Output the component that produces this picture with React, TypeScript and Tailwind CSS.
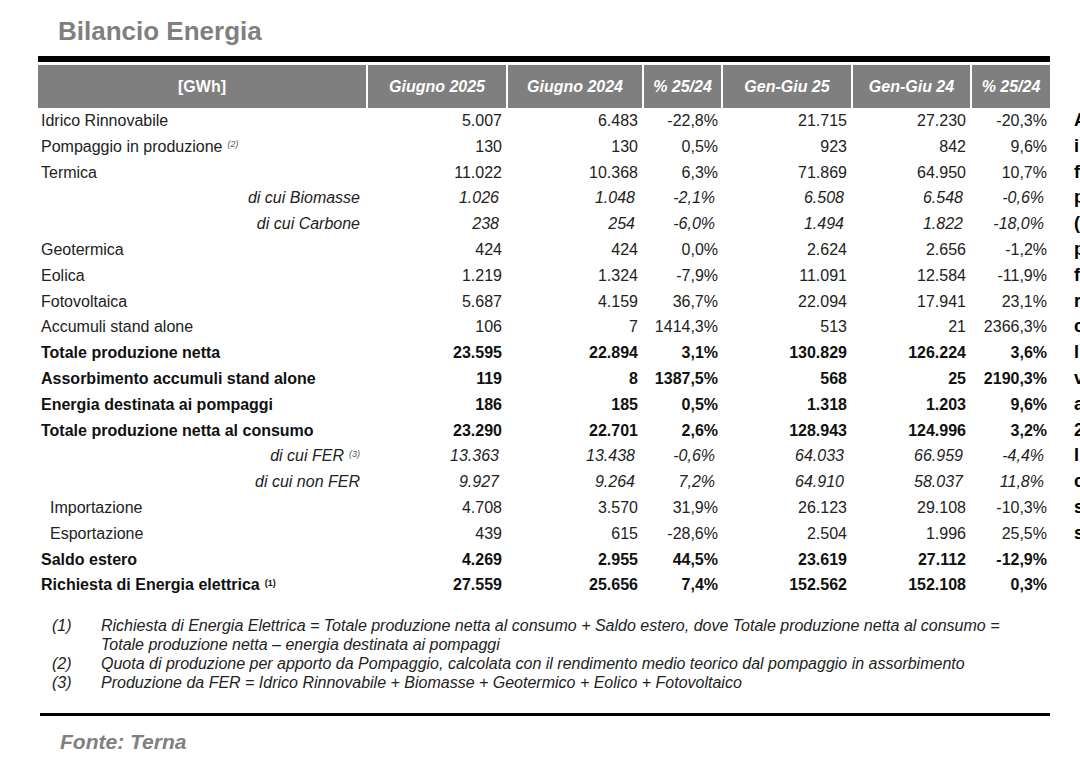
import React from "react";

type Kind = "normal" | "bold" | "sub" | "indent";

type Row = {
  label: string;
  sup?: string;
  kind: Kind;
  vals: string[];
};

const ROWS: Row[] = [
  { label: "Idrico Rinnovabile", kind: "normal", vals: ["5.007", "6.483", "-22,8%", "21.715", "27.230", "-20,3%"] },
  { label: "Pompaggio in produzione", sup: "(2)", kind: "normal", vals: ["130", "130", "0,5%", "923", "842", "9,6%"] },
  { label: "Termica", kind: "normal", vals: ["11.022", "10.368", "6,3%", "71.869", "64.950", "10,7%"] },
  { label: "di cui Biomasse", kind: "sub", vals: ["1.026", "1.048", "-2,1%", "6.508", "6.548", "-0,6%"] },
  { label: "di cui Carbone", kind: "sub", vals: ["238", "254", "-6,0%", "1.494", "1.822", "-18,0%"] },
  { label: "Geotermica", kind: "normal", vals: ["424", "424", "0,0%", "2.624", "2.656", "-1,2%"] },
  { label: "Eolica", kind: "normal", vals: ["1.219", "1.324", "-7,9%", "11.091", "12.584", "-11,9%"] },
  { label: "Fotovoltaica", kind: "normal", vals: ["5.687", "4.159", "36,7%", "22.094", "17.941", "23,1%"] },
  { label: "Accumuli stand alone", kind: "normal", vals: ["106", "7", "1414,3%", "513", "21", "2366,3%"] },
  { label: "Totale produzione netta", kind: "bold", vals: ["23.595", "22.894", "3,1%", "130.829", "126.224", "3,6%"] },
  { label: "Assorbimento accumuli stand alone", kind: "bold", vals: ["119", "8", "1387,5%", "568", "25", "2190,3%"] },
  { label: "Energia destinata ai pompaggi", kind: "bold", vals: ["186", "185", "0,5%", "1.318", "1.203", "9,6%"] },
  { label: "Totale produzione netta al consumo", kind: "bold", vals: ["23.290", "22.701", "2,6%", "128.943", "124.996", "3,2%"] },
  { label: "di cui FER", sup: "(3)", kind: "sub", vals: ["13.363", "13.438", "-0,6%", "64.033", "66.959", "-4,4%"] },
  { label: "di cui non FER", kind: "sub", vals: ["9.927", "9.264", "7,2%", "64.910", "58.037", "11,8%"] },
  { label: "Importazione", kind: "indent", vals: ["4.708", "3.570", "31,9%", "26.123", "29.108", "-10,3%"] },
  { label: "Esportazione", kind: "indent", vals: ["439", "615", "-28,6%", "2.504", "1.996", "25,5%"] },
  { label: "Saldo estero", kind: "bold", vals: ["4.269", "2.955", "44,5%", "23.619", "27.112", "-12,9%"] },
  { label: "Richiesta di Energia elettrica", sup: "(1)", kind: "bold", vals: ["27.559", "25.656", "7,4%", "152.562", "152.108", "0,3%"] },
];

const HEADERS = ["Giugno 2025", "Giugno 2024", "% 25/24", "Gen-Giu 25", "Gen-Giu 24", "% 25/24"];

// clipped column of text that runs off the right edge of the page
const EDGE = ["A", "i", "f", "p", "(", "p", "f", "r", "c", "l", "v", "a", "2", "l", "c", "s", "s"];

const NOTES = [
  {
    n: "(1)",
    lines: [
      "Richiesta di Energia Elettrica = Totale produzione netta al consumo + Saldo estero, dove Totale produzione netta al consumo =",
      "Totale produzione netta – energia destinata ai pompaggi",
    ],
  },
  { n: "(2)", lines: ["Quota di produzione per apporto da Pompaggio, calcolata con il rendimento medio teorico dal pompaggio in assorbimento"] },
  { n: "(3)", lines: ["Produzione da FER = Idrico Rinnovabile + Biomasse + Geotermico + Eolico + Fotovoltaico"] },
];

const COLS = "grid grid-cols-[328px_140px_136px_79px_130px_119px_80px]";

function ValueCell({ v, kind, pct }: { v: string; kind: Kind; pct: boolean }) {
  const italic = kind === "sub";
  return (
    <div
      className={[
        "text-right whitespace-nowrap",
        kind === "bold" ? "font-bold text-[#111]" : "text-[#222]",
        italic ? "italic" : "",
        italic ? (pct ? "pr-[6px]" : "pr-[7px]") : pct ? "pr-[3px]" : "pr-[4px]",
      ].join(" ")}
    >
      {v}
    </div>
  );
}

export default function App() {
  return (
    <div className="relative h-[767px] w-[1080px] overflow-hidden bg-white font-['Liberation_Sans',Arial,sans-serif] text-[#222]">
      <div className="flex">
        <div className="ml-[38px] w-[1012px] shrink-0">
          <h1 className="mt-[16px] pl-[20px] text-[26px] font-bold leading-[30px] text-[#7f7f7f]">
            Bilancio Energia
          </h1>

          <div className="mt-[10px] h-[6px] bg-black" />

          {/* header */}
          <div className={`${COLS} mt-[3px] h-[43px] bg-[#7f7f7f] text-[16px] font-bold text-white`}>
            <div className="flex items-center justify-center">[GWh]</div>
            {HEADERS.map((h, i) => (
              <div key={i} className="flex items-center justify-center border-l-2 border-white italic">
                {h}
              </div>
            ))}
          </div>

          {/* body */}
          <div className="text-[16px] leading-[25.8px]">
            {ROWS.map((r) => (
              <div key={r.label} className={`${COLS} h-[25.8px]`}>
                <div
                  className={[
                    "whitespace-nowrap",
                    r.kind === "bold" ? "pl-[3px] font-bold text-[#111]" : "",
                    r.kind === "normal" ? "pl-[3px]" : "",
                    r.kind === "indent" ? "pl-[12px]" : "",
                    r.kind === "sub" ? "pr-[6px] text-right italic" : "",
                  ].join(" ")}
                >
                  {r.label}
                  {r.sup && (
                    <sup
                      className={[
                        "ml-[5px] text-[9px]",
                        r.kind === "bold" ? "font-bold not-italic" : "italic text-[#555]",
                      ].join(" ")}
                    >
                      {r.sup}
                    </sup>
                  )}
                </div>
                {r.vals.map((v, i) => (
                  <ValueCell key={i} v={v} kind={r.kind} pct={i === 2 || i === 5} />
                ))}
              </div>
            ))}
          </div>

          {/* footnotes */}
          <div className="mt-[18px] text-[16px] italic leading-[19px] text-[#222]">
            {NOTES.map((note) => (
              <div key={note.n} className="flex">
                <div className="w-[63px] shrink-0 pl-[14px]">{note.n}</div>
                <div>
                  {note.lines.map((l) => (
                    <div key={l} className="whitespace-nowrap">
                      {l}
                    </div>
                  ))}
                </div>
              </div>
            ))}
          </div>

          <div className="mt-[21px] ml-[2px] h-[3px] bg-black" />

          <div className="mt-[14px] pl-[22px] text-[21px] font-bold italic leading-[24px] text-[#808080]">
            Fonte: Terna
          </div>
        </div>

        <div className="ml-[24px] pt-[108px] text-[18px] font-bold leading-[25.8px] text-black">
          {EDGE.map((c, i) => (
            <div key={i}>{c}</div>
          ))}
        </div>
      </div>
    </div>
  );
}
